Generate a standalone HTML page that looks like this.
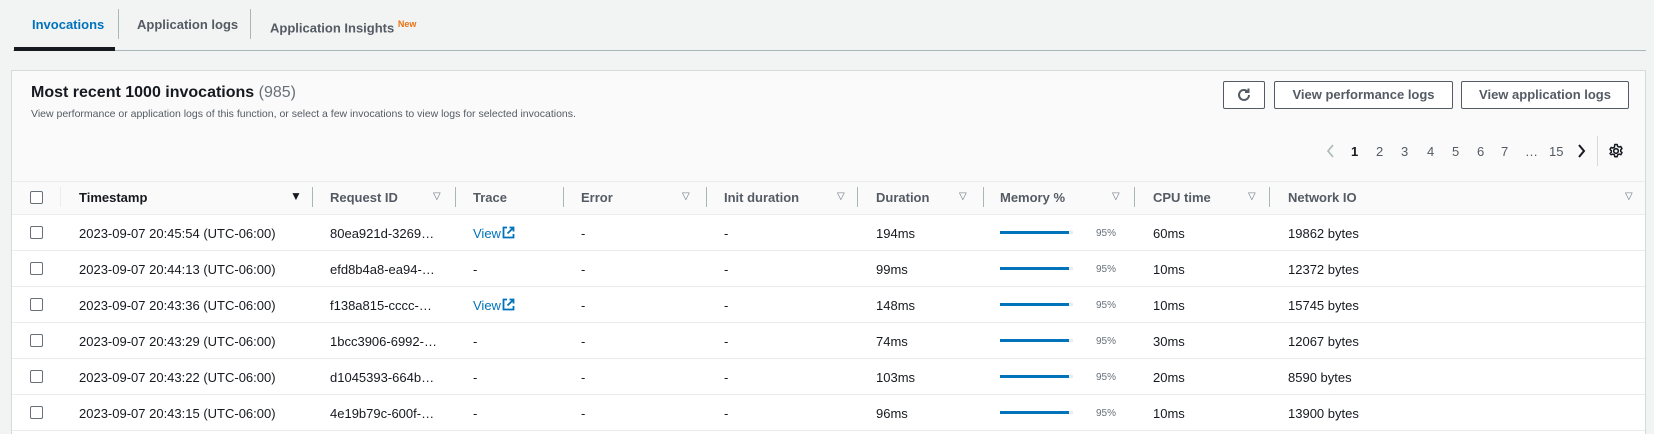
<!DOCTYPE html>
<html><head><meta charset="utf-8"><style>
*{margin:0;padding:0;box-sizing:border-box}
html,body{width:1654px;height:434px;overflow:hidden}
body{background:#f2f3f3;font-family:"Liberation Sans",sans-serif;color:#16191f;position:relative}
.a{position:absolute;white-space:nowrap}
.tab{font-size:13px;font-weight:bold;color:#545b64;top:17px}
.vd{position:absolute;width:1px;background:#aab7b8}
.panel{position:absolute;left:11px;top:70px;width:1635px;height:364px;background:#fff;border:1px solid #d5dbdb;border-bottom:none;overflow:hidden}
.hd{position:absolute;left:0;top:0;width:100%;height:145px;background:#fafafa;border-bottom:1px solid #eaeded}
.btn{position:absolute;top:81px;height:28px;border:1px solid #545b64;border-radius:2px;background:#fff;font-size:13px;font-weight:bold;color:#545b64;text-align:center;line-height:26px}
.pg{font-size:13px;color:#545b64;top:144px}
.th{font-size:13px;font-weight:bold;color:#545b64;top:190px}
.srt{font-size:10px;color:#687078;top:191px}
.cd{position:absolute;top:187px;height:20px;width:1px;background:#aab7b8}
.row{position:absolute;left:12px;width:1633px;height:36px;border-bottom:1px solid #eaeded;background:#fff;font-size:13px}
.row span{position:absolute;top:11px;white-space:nowrap}
.cb{position:absolute;left:18px;top:11px;width:13px;height:13px;border:1px solid #687078;border-radius:2px;background:#fff}
.bar{position:absolute;left:988px;top:16px;width:73px;height:3px;background:#eaeded}
.bar i{display:block;width:69px;height:3px;background:#0073bb}
.pc{font-size:10px;color:#687078}
.lk{color:#0073bb}
</style></head><body>
<div class="a tab" style="left:32px;color:#0073bb">Invocations</div>
<div class="vd" style="left:118px;top:9px;height:30px"></div>
<div class="a tab" style="left:137px">Application logs</div>
<div class="vd" style="left:250px;top:9px;height:30px"></div>
<div class="a tab" style="left:270px;top:19px">Application Insights <sup style="color:#ec7211;font-size:9px">New</sup></div>
<div style="position:absolute;left:13px;top:50px;width:1633px;height:1px;background:#aab7b8"></div>
<div style="position:absolute;left:14px;top:47px;width:101px;height:4px;background:#16191f"></div>

<div class="panel"><div class="hd"></div></div>
<div class="a" style="left:31px;top:84px;font-size:16px;font-weight:bold">Most recent 1000 invocations <span style="font-weight:normal;color:#687078">(985)</span></div>
<div class="a" style="left:31px;top:108px;font-size:10.5px;color:#545b64">View performance or application logs of this function, or select a few invocations to view logs for selected invocations.</div>
<div class="btn" style="left:1223px;width:42px"><svg width="16" height="16" viewBox="0 0 16 16" style="margin-top:5px"><path d="M13 8a5 5 0 1 1-1.6-3.7" fill="none" stroke="#545b64" stroke-width="2"/><path d="M12.5 1.5v3.5H9" fill="none" stroke="#545b64" stroke-width="2"/></svg></div>
<div class="btn" style="left:1274px;width:179px">View performance logs</div>
<div class="btn" style="left:1461px;width:168px">View application logs</div>

<svg class="a" style="left:1326px;top:143px" width="10" height="16" viewBox="0 0 10 16"><path d="M7 2 2 8l5 6" fill="none" stroke="#aab7b8" stroke-width="1.6"/></svg>
<div class="a pg" style="left:1351px;color:#16191f;font-weight:bold">1</div>
<div class="a pg" style="left:1376px">2</div>
<div class="a pg" style="left:1401px">3</div>
<div class="a pg" style="left:1427px">4</div>
<div class="a pg" style="left:1452px">5</div>
<div class="a pg" style="left:1477px">6</div>
<div class="a pg" style="left:1501px">7</div>
<div class="a pg" style="left:1525px">…</div>
<div class="a pg" style="left:1549px">15</div>
<svg class="a" style="left:1576px;top:143px" width="10" height="16" viewBox="0 0 10 16"><path d="M3 2l5 6-5 6" fill="none" stroke="#16191f" stroke-width="2"/></svg>
<div class="vd" style="left:1597px;top:136px;height:30px;background:#d5dbdb"></div>
<svg class="a" style="left:1608px;top:143px" width="16" height="16" viewBox="0 0 16 16"><circle cx="8" cy="8" r="2.3" fill="none" stroke="#16191f" stroke-width="1.6"/><path d="M6.8 1.5h2.4l.4 1.8 1.5.8 1.7-.6 1.2 2.1-1.3 1.2v1.6l1.3 1.2-1.2 2.1-1.7-.6-1.5.8-.4 1.8H6.8l-.4-1.8-1.5-.8-1.7.6L2 10.5l1.3-1.2V7.7L2 6.5l1.2-2.1 1.7.6 1.5-.8z" fill="none" stroke="#16191f" stroke-width="1.5" stroke-linejoin="round"/></svg>

<div style="position:absolute;left:12px;top:181px;width:1633px;height:1px;background:#eaeded"></div>
<div class="cb" style="left:30px;top:191px;position:absolute"></div>
<div class="cd" style="left:60px;background:#eaeded"></div>
<div class="a th" style="left:79px;color:#16191f">Timestamp</div><div class="a srt" style="left:290px;color:#16191f;font-size:12px;top:189px">▼</div><div class="cd" style="left:312px"></div>
<div class="a th" style="left:330px">Request ID</div><div class="a srt" style="left:433px">▽</div><div class="cd" style="left:455px"></div>
<div class="a th" style="left:473px">Trace</div><div class="cd" style="left:563px"></div>
<div class="a th" style="left:581px">Error</div><div class="a srt" style="left:682px">▽</div><div class="cd" style="left:706px"></div>
<div class="a th" style="left:724px">Init duration</div><div class="a srt" style="left:837px">▽</div><div class="cd" style="left:857px"></div>
<div class="a th" style="left:876px">Duration</div><div class="a srt" style="left:959px">▽</div><div class="cd" style="left:983px"></div>
<div class="a th" style="left:1000px">Memory %</div><div class="a srt" style="left:1112px">▽</div><div class="cd" style="left:1134px"></div>
<div class="a th" style="left:1153px">CPU time</div><div class="a srt" style="left:1248px">▽</div><div class="cd" style="left:1269px"></div>
<div class="a th" style="left:1288px">Network IO</div><div class="a srt" style="left:1625px">▽</div>
<div style="position:absolute;left:12px;top:214px;width:1633px;height:1px;background:#eaeded"></div>

<div class="row" style="top:215px"><div class="cb"></div><span style="left:67px">2023-09-07 20:45:54 (UTC-06:00)</span><span style="left:318px">80ea921d-3269…</span><span class="lk" style="left:461px">View<svg width="13" height="13" viewBox="0 0 13 13" style="vertical-align:-1px;margin-left:1px"><path d="M5 1.5H1.5v10h10V8M7.5 1.5h4v4M11.5 1.5 5.5 7.5" fill="none" stroke="#0073bb" stroke-width="1.8"/></svg></span><span style="left:569px">-</span><span style="left:712px">-</span><span style="left:864px">194ms</span><div class="bar"><i></i></div><span class="pc" style="left:1084px;top:13px">95%</span><span style="left:1141px">60ms</span><span style="left:1276px">19862 bytes</span></div>
<div class="row" style="top:251px"><div class="cb"></div><span style="left:67px">2023-09-07 20:44:13 (UTC-06:00)</span><span style="left:318px">efd8b4a8-ea94-…</span><span style="left:461px">-</span><span style="left:569px">-</span><span style="left:712px">-</span><span style="left:864px">99ms</span><div class="bar"><i></i></div><span class="pc" style="left:1084px;top:13px">95%</span><span style="left:1141px">10ms</span><span style="left:1276px">12372 bytes</span></div>
<div class="row" style="top:287px"><div class="cb"></div><span style="left:67px">2023-09-07 20:43:36 (UTC-06:00)</span><span style="left:318px">f138a815-cccc-…</span><span class="lk" style="left:461px">View<svg width="13" height="13" viewBox="0 0 13 13" style="vertical-align:-1px;margin-left:1px"><path d="M5 1.5H1.5v10h10V8M7.5 1.5h4v4M11.5 1.5 5.5 7.5" fill="none" stroke="#0073bb" stroke-width="1.8"/></svg></span><span style="left:569px">-</span><span style="left:712px">-</span><span style="left:864px">148ms</span><div class="bar"><i></i></div><span class="pc" style="left:1084px;top:13px">95%</span><span style="left:1141px">10ms</span><span style="left:1276px">15745 bytes</span></div>
<div class="row" style="top:323px"><div class="cb"></div><span style="left:67px">2023-09-07 20:43:29 (UTC-06:00)</span><span style="left:318px">1bcc3906-6992-…</span><span style="left:461px">-</span><span style="left:569px">-</span><span style="left:712px">-</span><span style="left:864px">74ms</span><div class="bar"><i></i></div><span class="pc" style="left:1084px;top:13px">95%</span><span style="left:1141px">30ms</span><span style="left:1276px">12067 bytes</span></div>
<div class="row" style="top:359px"><div class="cb"></div><span style="left:67px">2023-09-07 20:43:22 (UTC-06:00)</span><span style="left:318px">d1045393-664b…</span><span style="left:461px">-</span><span style="left:569px">-</span><span style="left:712px">-</span><span style="left:864px">103ms</span><div class="bar"><i></i></div><span class="pc" style="left:1084px;top:13px">95%</span><span style="left:1141px">20ms</span><span style="left:1276px">8590 bytes</span></div>
<div class="row" style="top:395px;height:36px"><div class="cb"></div><span style="left:67px">2023-09-07 20:43:15 (UTC-06:00)</span><span style="left:318px">4e19b79c-600f-…</span><span style="left:461px">-</span><span style="left:569px">-</span><span style="left:712px">-</span><span style="left:864px">96ms</span><div class="bar"><i></i></div><span class="pc" style="left:1084px;top:13px">95%</span><span style="left:1141px">10ms</span><span style="left:1276px">13900 bytes</span></div>
</body></html>
